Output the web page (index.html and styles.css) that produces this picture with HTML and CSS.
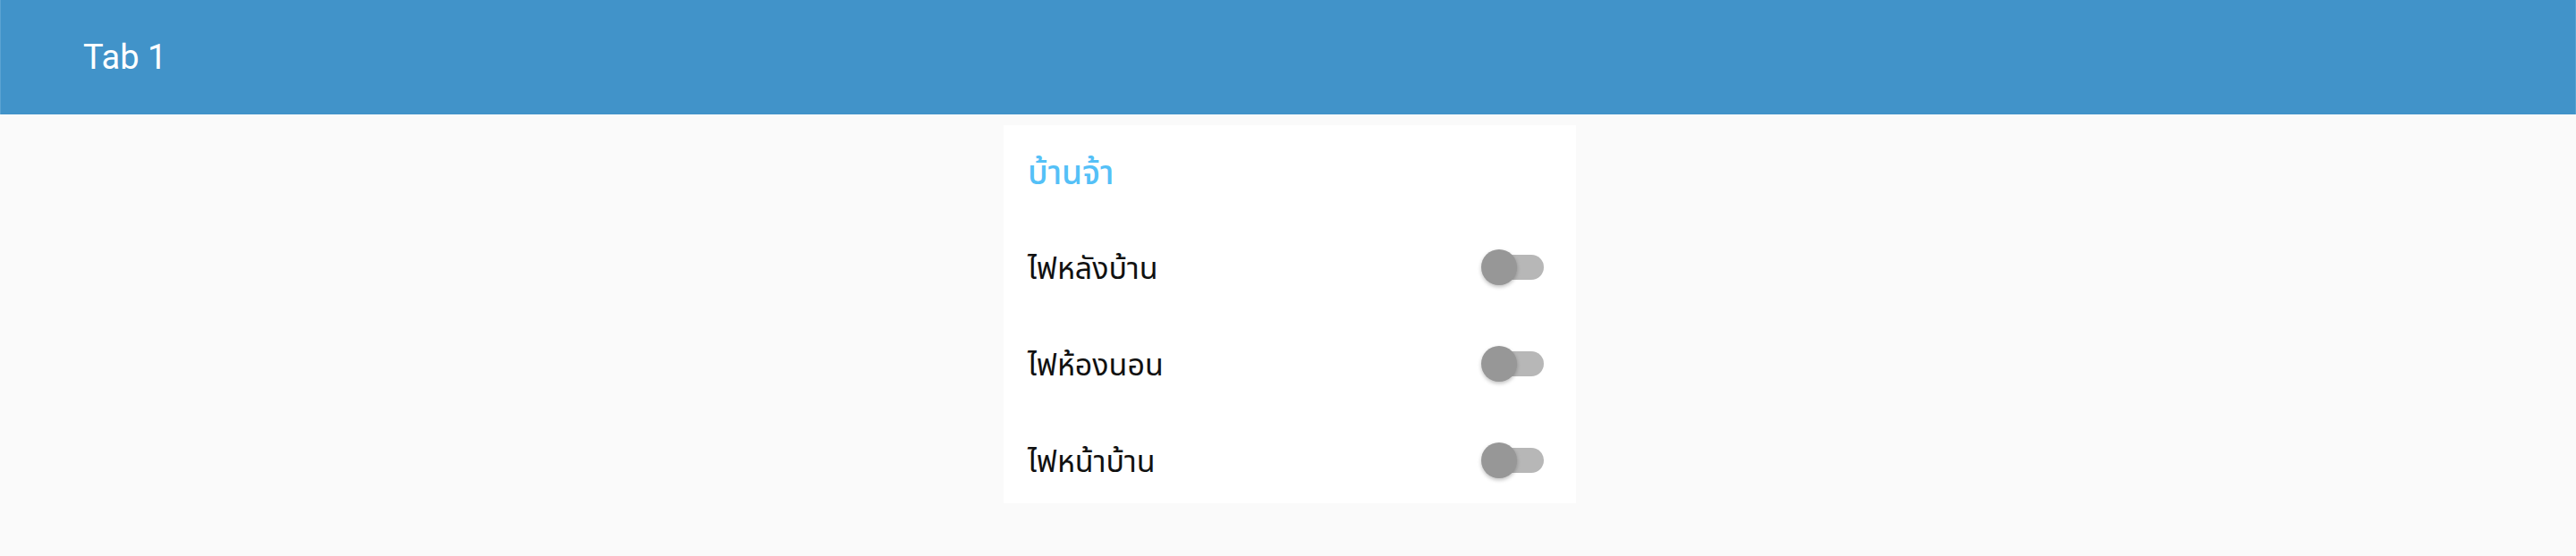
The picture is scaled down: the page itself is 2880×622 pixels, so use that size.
FILE: index.html
```html
<!DOCTYPE html>
<html lang="th">
<head>
<meta charset="utf-8">
<title>Tab 1</title>
<link rel="stylesheet" href="styles.css">
</head>
<body>
<header class="toolbar"><span class="toolbar-title">Tab 1</span></header>
<main class="content">
  <section class="card">
    <div class="list-header">บ้านจ้า</div>
    <div class="item"><span class="label">ไฟหลังบ้าน</span><span class="toggle"><span class="knob"></span></span></div>
    <div class="item"><span class="label">ไฟห้องนอน</span><span class="toggle"><span class="knob"></span></span></div>
    <div class="item"><span class="label">ไฟหน้าบ้าน</span><span class="toggle"><span class="knob"></span></span></div>
  </section>
</main>
</body>
</html>
```
FILE: styles.css
```css
html, body {
  margin: 0;
  padding: 0;
}
body {
  background: #fafafa;
  font-family: Roboto, "Noto Sans Thai", sans-serif;
  height: 622px;
  overflow: hidden;
}
.toolbar {
  height: 128px;
  background: #4193c9;
  border-left: 1px solid #5aa2d2;
  border-right: 1px solid #5aa2d2;
  display: flex;
  align-items: center;
  padding-left: 92px;
  box-sizing: border-box;
}
.toolbar-title {
  color: #fff;
  font-size: 38px;
  font-family: Roboto, sans-serif;
}
.content {
  display: flex;
  padding-top: 12px;
  padding-left: 1122px;
}
.card {
  width: 640px;
  height: 423px;
  background: #fff;
  overflow: hidden;
}
.list-header {
  height: 103px;
  box-sizing: border-box;
  padding: 6px 0 0 27px;
  display: flex;
  align-items: center;
  color: #54c0f7;
  font-size: 37px;
  font-weight: 500;
}
.item {
  height: 108px;
  box-sizing: border-box;
  padding: 4px 36px 0 27px;
  display: flex;
  align-items: center;
  justify-content: space-between;
}
.label {
  font-size: 34px;
  color: #111;
  padding-top: 4px;
}
.toggle {
  width: 68px;
  height: 28px;
  border-radius: 14px;
  background: #b7b7b7;
  position: relative;
}
.knob {
  position: absolute;
  left: -2px;
  top: -6px;
  width: 40px;
  height: 40px;
  border-radius: 50%;
  background: #979797;
  box-shadow: 0 2px 4px rgba(0,0,0,0.25);
}
```
